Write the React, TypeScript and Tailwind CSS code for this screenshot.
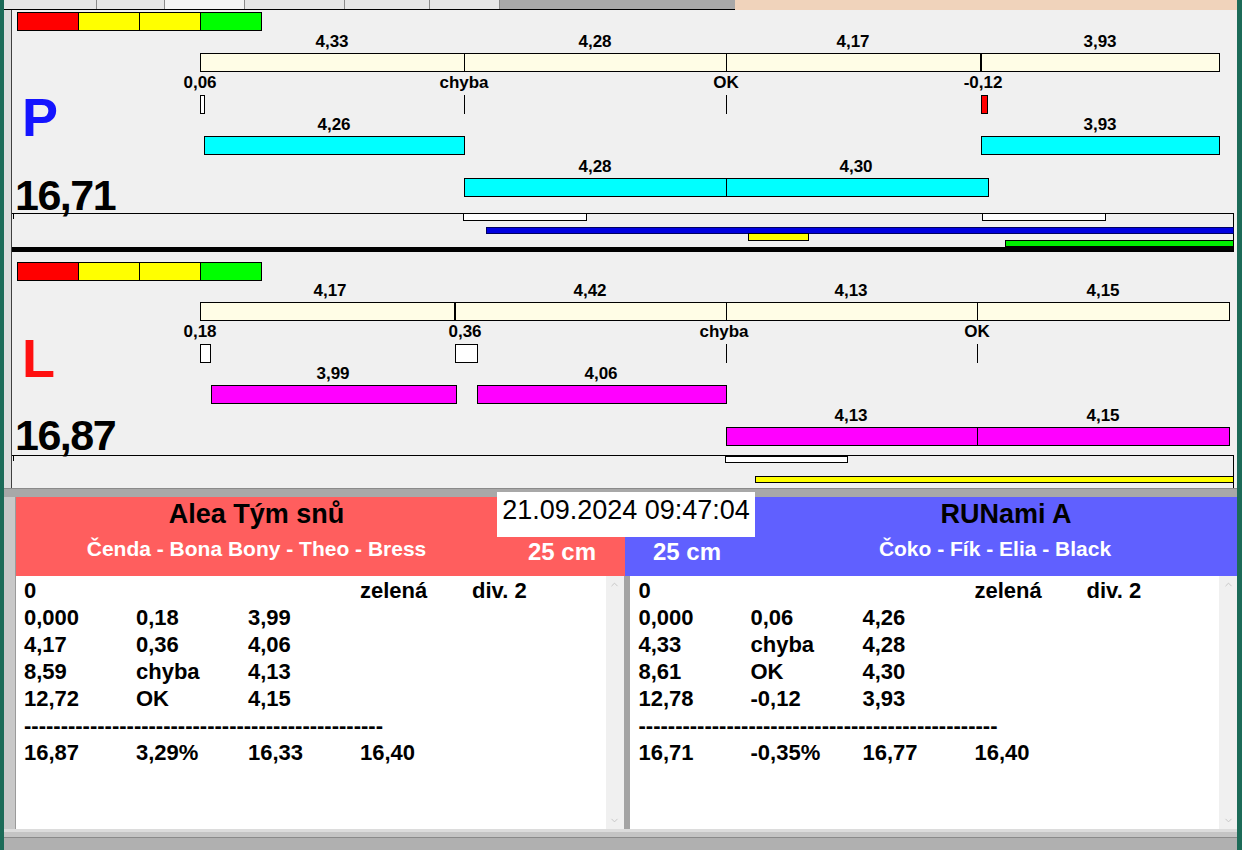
import { ChevronUp, ChevronDown } from "lucide-react"

// chart canvas origin in page coordinates
const X0 = 12
const Y0 = 10

type R4 = [number, number, number, number]

const Rect = ({ r, className }: { r: R4; className: string }) => {
  const [x1, y1, x2, y2] = r
  return (
    <div
      className={`absolute box-border ${className}`}
      style={{ left: x1 - X0, top: y1 - Y0, width: x2 - x1, height: y2 - y1 }}
    />
  )
}

const Label = ({ x, y, text }: { x: number; y: number; text: string }) => (
  <div
    className="absolute -translate-x-1/2 -translate-y-1/2 whitespace-nowrap text-[17px] font-bold leading-none text-black"
    style={{ left: x - X0, top: y - Y0 }}
  >
    {text}
  </div>
)

type Bar = { x1: number; x2: number; y: number; label: string; cx: number }

type Lane = {
  top: number
  shift: number
  letter: string
  letterTop: number
  letterClass: string
  total: string
  totalTop: number
  cream: [number, number]
  dividers: { x: number; w: number }[]
  above: [number, string][]
  below: [number, string][]
  ticks: { x1: number; x2: number; className: string }[]
  bars: Bar[]
  barClass: string
}

const lanes: Lane[] = [
  {
    top: 0,
    shift: 0,
    letter: "P",
    letterTop: 90,
    letterClass: "text-[#1414ff]",
    total: "16,71",
    totalTop: 174,
    cream: [200, 1220],
    dividers: [
      { x: 464, w: 1 },
      { x: 726, w: 1 },
      { x: 980, w: 2 },
    ],
    above: [
      [332, "4,33"],
      [595, "4,28"],
      [853, "4,17"],
      [1100, "3,93"],
    ],
    below: [
      [200, "0,06"],
      [464, "chyba"],
      [726, "OK"],
      [983, "-0,12"],
    ],
    ticks: [
      { x1: 200, x2: 205, className: "bg-white border border-black" },
      { x1: 464, x2: 465, className: "bg-black" },
      { x1: 726, x2: 727, className: "bg-black" },
      { x1: 981, x2: 988, className: "bg-[#ff0000] border border-black" },
    ],
    bars: [
      { x1: 204, x2: 465, y: 136, label: "4,26", cx: 334 },
      { x1: 981, x2: 1220, y: 136, label: "3,93", cx: 1100 },
      { x1: 464, x2: 727, y: 178, label: "4,28", cx: 595 },
      { x1: 726, x2: 989, y: 178, label: "4,30", cx: 856 },
    ],
    barClass: "bg-[#00ffff] border border-black",
  },
  {
    top: 250,
    shift: 249,
    letter: "L",
    letterTop: 331,
    letterClass: "text-[#ff1010]",
    total: "16,87",
    totalTop: 414,
    cream: [200, 1230],
    dividers: [
      { x: 454, w: 2 },
      { x: 726, w: 1 },
      { x: 977, w: 1 },
    ],
    above: [
      [330, "4,17"],
      [590, "4,42"],
      [851, "4,13"],
      [1103, "4,15"],
    ],
    below: [
      [200, "0,18"],
      [465, "0,36"],
      [724, "chyba"],
      [977, "OK"],
    ],
    ticks: [
      { x1: 200, x2: 211, className: "bg-white border border-black" },
      { x1: 455, x2: 478, className: "bg-white border border-black" },
      { x1: 726, x2: 727, className: "bg-black" },
      { x1: 977, x2: 978, className: "bg-black" },
    ],
    bars: [
      { x1: 211, x2: 457, y: 135, label: "3,99", cx: 333 },
      { x1: 477, x2: 727, y: 135, label: "4,06", cx: 601 },
      { x1: 726, x2: 978, y: 177, label: "4,13", cx: 851 },
      { x1: 977, x2: 1230, y: 177, label: "4,15", cx: 1103 },
    ],
    barClass: "bg-[#ff00ff] border border-black",
  },
]

const LaneView = ({ lane }: { lane: Lane }) => {
  const t = lane.top
  const s = lane.shift
  return (
    <>
      {/* colour scale */}
      <Rect r={[17, 12 + t, 79, 31 + t]} className="bg-[#ff0000] border border-black" />
      <Rect r={[78, 12 + t, 140, 31 + t]} className="bg-[#ffff00] border border-black" />
      <Rect r={[139, 12 + t, 201, 31 + t]} className="bg-[#ffff00] border border-black" />
      <Rect r={[200, 12 + t, 262, 31 + t]} className="bg-[#00ff00] border border-black" />

      {/* segment bar */}
      <Rect r={[lane.cream[0], 53 + s, lane.cream[1], 72 + s]} className="bg-[#fffde6] border border-black" />
      {lane.dividers.map((d) => (
        <Rect key={d.x} r={[d.x, 53 + s, d.x + d.w, 72 + s]} className="bg-black" />
      ))}
      {lane.above.map(([x, txt]) => (
        <Label key={`a${x}`} x={x} y={41 + s} text={txt} />
      ))}
      {lane.below.map(([x, txt]) => (
        <Label key={`b${x}`} x={x} y={82 + s} text={txt} />
      ))}
      {lane.ticks.map((k) => (
        <Rect key={`t${k.x1}`} r={[k.x1, 95 + s, k.x2, 114 + s]} className={k.className} />
      ))}

      {/* runs */}
      {lane.bars.map((b) => (
        <div key={`r${b.x1}`}>
          <Rect r={[b.x1, b.y + t, b.x2, b.y + t + 19]} className={lane.barClass} />
          <Label x={b.cx} y={b.y + t - 12} text={b.label} />
        </div>
      ))}

      {/* letter + total */}
      <div
        className={`absolute font-bold leading-none text-[54px] ${lane.letterClass}`}
        style={{ left: 22 - X0, top: lane.letterTop - Y0 }}
      >
        {lane.letter}
      </div>
      <div
        className="absolute font-bold leading-none text-[43px] tracking-[-1.5px] text-black"
        style={{ left: 15 - X0, top: lane.totalTop - Y0 }}
      >
        {lane.total}
      </div>
    </>
  )
}

const Chart = () => (
  <div className="relative flex-1 overflow-hidden bg-[#f0f0f0]">
    {lanes.map((l) => (
      <LaneView key={l.letter} lane={l} />
    ))}

    {/* P timeline strip */}
    <Rect r={[12, 213, 1234, 214]} className="bg-black" />
    <Rect r={[1233, 213, 1234, 247]} className="bg-black" />
    <Rect r={[13, 213, 14, 219]} className="bg-black" />
    <Rect r={[463, 213, 587, 221]} className="bg-white border border-black" />
    <Rect r={[982, 213, 1106, 221]} className="bg-white border border-black" />
    <Rect r={[486, 227, 1234, 234]} className="bg-[#0000e0] border border-[#000060]" />
    <Rect r={[748, 233, 809, 241]} className="bg-[#ffff00] border border-black" />
    <Rect r={[1005, 240, 1234, 247]} className="bg-[#00ee00] border border-black" />
    <Rect r={[12, 247, 1234, 252]} className="bg-black" />

    {/* L timeline strip */}
    <Rect r={[12, 455, 1234, 456]} className="bg-black" />
    <Rect r={[1233, 455, 1234, 488]} className="bg-black" />
    <Rect r={[13, 455, 14, 461]} className="bg-black" />
    <Rect r={[725, 456, 848, 463]} className="bg-white border border-black" />
    <Rect r={[755, 476, 1234, 483]} className="bg-[#ffff00] border border-black" />
  </div>
)

const leftRows: string[][] = [
  ["0", "", "", "zelená", "div. 2"],
  ["0,000", "0,18", "3,99"],
  ["4,17", "0,36", "4,06"],
  ["8,59", "chyba", "4,13"],
  ["12,72", "OK", "4,15"],
]
const rightRows: string[][] = [
  ["0", "", "", "zelená", "div. 2"],
  ["0,000", "0,06", "4,26"],
  ["4,33", "chyba", "4,28"],
  ["8,61", "OK", "4,30"],
  ["12,78", "-0,12", "3,93"],
]

const DASHES = "-".repeat(49)

const ResultList = ({ rows, totals, pad }: { rows: string[][]; totals: string[]; pad: string }) => (
  <div className="flex h-full flex-1">
    <div className={`flex-1 bg-white pt-[1px] ${pad} text-[22px] font-bold leading-[27px] text-black`}>
      {rows.map((row, i) => (
        <div key={i} className="flex">
          {row.map((c, j) => (
            <div key={j} className="w-[112px] shrink-0 whitespace-nowrap">
              {c}
            </div>
          ))}
        </div>
      ))}
      <div className="whitespace-nowrap">{DASHES}</div>
      <div className="flex">
        {totals.map((c, j) => (
          <div key={j} className="w-[112px] shrink-0 whitespace-nowrap">
            {c}
          </div>
        ))}
      </div>
    </div>
    <div className="flex w-[18px] flex-col items-center justify-between bg-[#f0f0f0] py-[3px]">
      <ChevronUp size={11} className="text-[#c4c4c4]" />
      <ChevronDown size={11} className="text-[#c4c4c4]" />
    </div>
  </div>
)

const tabs = [93, 68, 80, 100, 85, 70]

export default function App() {
  return (
    <div className="flex h-[850px] w-[1242px] overflow-hidden bg-[#b4b4b4] font-['Liberation_Sans','Arial',sans-serif]">
      <div className="w-[4px] bg-[#1c6b58]" />
      <div className="flex flex-1 flex-col">
        {/* tab strip */}
        <div className="flex h-[10px]">
          <div className="flex w-[731px] border-b border-black bg-[#a8a8a8]">
            {tabs.map((w, i) => (
              <div
                key={i}
                className={`h-full border-r border-[#8a8a8a] ${i === 2 ? "bg-[#f4f4f4]" : "bg-[#e6e6e6]"}`}
                style={{ width: w }}
              />
            ))}
          </div>
          <div className="flex-1 bg-[#f0d3bb]" />
        </div>

        {/* chart */}
        <div className="flex h-[478px]">
          <div className="w-[8px] border-r border-[#404040] bg-[#dcdcdc]" />
          <Chart />
        </div>

        {/* lower part */}
        <div className="relative flex flex-col">
          <div className="h-[9px] border-t border-[#8a8a8a] bg-[#a8a8a8]" />
          <div className="flex h-[332px]">
            <div className="w-[12px] border-r border-[#9a9a9a] bg-[#c8c8c8]" />
            <div className="flex flex-1 flex-col">
              {/* team headers */}
              <div className="flex h-[79px]">
                <div className="flex w-[609px] flex-col bg-[#ff5e5e]">
                  <div className="flex h-[34px] w-[481px] items-center justify-center text-[27px] font-bold text-black">
                    Alea Tým snů
                  </div>
                  <div className="flex h-[45px] items-center pb-[9px]">
                    <div className="w-[481px] text-center text-[21px] font-bold text-white">
                      Čenda - Bona Bony - Theo - Bress
                    </div>
                    <div className="ml-[31px] pt-[6px] text-[24px] font-bold text-white">25 cm</div>
                  </div>
                </div>
                <div className="flex flex-1 flex-col bg-[#6060ff]">
                  <div className="flex h-[34px] items-center justify-center pl-[150px] text-[27px] font-bold text-black">
                    RUNami A
                  </div>
                  <div className="flex h-[45px] items-center pb-[9px]">
                    <div className="w-[100px] pl-[28px] pt-[6px] text-[24px] font-bold text-white">25 cm</div>
                    <div className="flex-1 pl-[28px] text-center text-[21px] font-bold text-white">
                      Čoko - Fík - Elia - Black
                    </div>
                  </div>
                </div>
              </div>
              {/* result lists */}
              <div className="flex h-[253px]">
                <ResultList rows={leftRows} totals={["16,87", "3,29%", "16,33", "16,40"]} pad="pl-[8px]" />
                <div className="w-[6px] bg-[#a4a4a4]" />
                <ResultList rows={rightRows} totals={["16,71", "-0,35%", "16,77", "16,40"]} pad="pl-[9px]" />
              </div>
            </div>
          </div>

          {/* timestamp box sits over the headers */}
          <div className="absolute left-[493px] top-[4px] flex h-[45px] w-[258px] items-center justify-center bg-white pb-[8px] text-[27px] text-black">
            21.09.2024 09:47:04
          </div>
        </div>

        {/* footer */}
        <div className="flex flex-1 flex-col">
          <div className="h-[3px] bg-[#dcdcdc]" />
          <div className="h-[6px] border-b border-[#8a8a8a] bg-[#c4c4c4]" />
          <div className="flex-1 bg-[#b0b0b0]" />
        </div>
      </div>
      <div className="w-[5px] bg-[#1c6b58]" />
    </div>
  )
}
